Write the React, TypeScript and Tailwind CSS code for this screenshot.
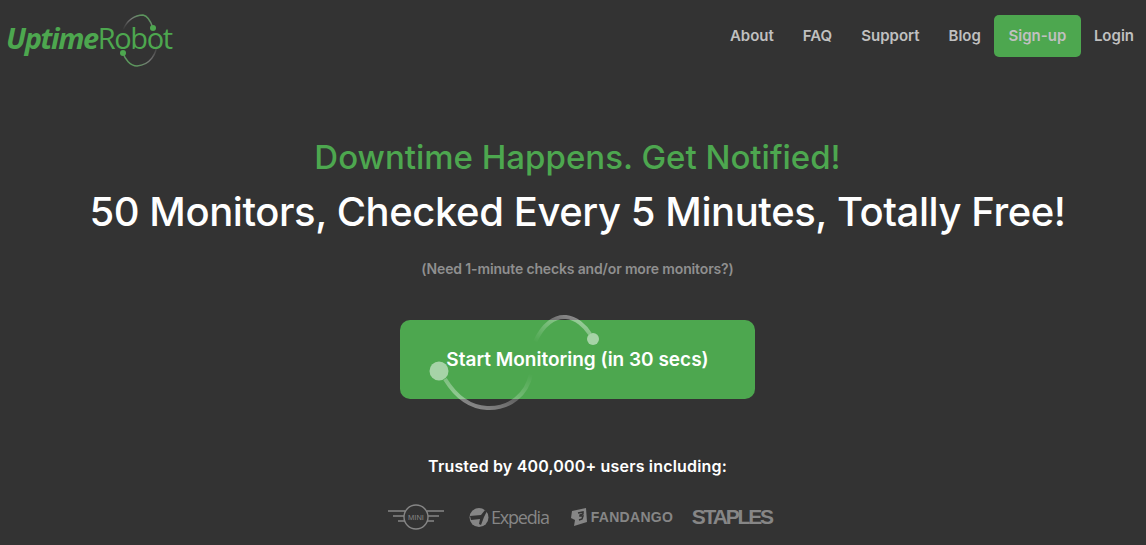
import React from 'react';

const links = ['About', 'FAQ', 'Support', 'Blog'];

const Logo = () => (
  <div className="relative w-[176px] h-[64px] font-['Open_Sans',sans-serif] text-[#4da74f]">
    <svg className="absolute left-[116px] top-[12px]" width="46" height="58" viewBox="0 0 46 58" fill="none">
      <defs>
        <linearGradient id="lt" x1="0" y1="1" x2="1" y2="0">
          <stop offset="0" stopColor="#666" stopOpacity="0" />
          <stop offset="0.5" stopColor="#777" />
          <stop offset="1" stopColor="#4da74f" />
        </linearGradient>
        <linearGradient id="lb" x1="1" y1="0" x2="0" y2="1">
          <stop offset="0" stopColor="#666" stopOpacity="0" />
          <stop offset="0.5" stopColor="#777" />
          <stop offset="1" stopColor="#4da74f" />
        </linearGradient>
      </defs>
      <path d="M7 18C11 8 19 3 27 3C32 4 35 10 37 16" stroke="url(#lt)" strokeWidth="1.5" />
      <path d="M41 30C41 42 34 53 21 54C14 54 9 47 7 41" stroke="url(#lb)" strokeWidth="1.5" />
      <circle cx="37" cy="16" r="3" fill="#4da74f" />
      <circle cx="7" cy="41" r="3" fill="#4da74f" />
    </svg>
    <span className="absolute left-[6px] top-[14px] text-[29px] leading-[48px] tracking-[-1.4px] whitespace-nowrap">
      <span className="font-bold italic">Uptime</span>
      <span className="font-normal">Robot</span>
    </span>
  </div>
);

const Header = () => (
  <header className="flex items-start justify-between pr-[12px] pt-[15px] h-[76px]">
    <div className="-mt-[15px]">
      <Logo />
    </div>
    <nav className="flex items-center text-[15px] font-semibold text-[#c0c0c0]">
      <div className="flex items-center gap-[29px] mr-[13px]">
        {links.map((l) => (
          <a key={l} className="h-[42px] leading-[42px]">{l}</a>
        ))}
      </div>
      <a className="w-[87px] h-[42px] leading-[42px] text-center bg-[#4da74f] rounded-[5px]">Sign-up</a>
      <a className="ml-[13px] h-[42px] leading-[42px]">Login</a>
    </nav>
  </header>
);

const CtaButton = () => (
  <div className="relative w-[355px] h-[79px] mt-[41px]">
    <button className="w-full h-full bg-[#4da74f] rounded-[10px] text-white text-[19px] font-semibold pt-[2px]">
      Start Monitoring (in 30 secs)
    </button>
    <svg className="absolute left-[25px] -top-[8px] pointer-events-none" width="180" height="102" viewBox="0 0 180 102" fill="none">
      <defs>
        <linearGradient id="ct" x1="0" y1="1" x2="1" y2="0">
          <stop offset="0" stopColor="#fff" stopOpacity="0" />
          <stop offset="0.5" stopColor="#fff" stopOpacity="0.25" />
          <stop offset="1" stopColor="#fff" stopOpacity="0.5" />
        </linearGradient>
        <linearGradient id="cb" x1="1" y1="0" x2="0" y2="1">
          <stop offset="0" stopColor="#fff" stopOpacity="0" />
          <stop offset="0.5" stopColor="#fff" stopOpacity="0.25" />
          <stop offset="1" stopColor="#fff" stopOpacity="0.5" />
        </linearGradient>
      </defs>
      <path d="M110 30C118 12 130 4 141 5C151 6 160 14 165 22" stroke="url(#ct)" strokeWidth="4" />
      <path d="M20 67C28 80 42 95 62 96C85 97 102 82 106 62" stroke="url(#cb)" strokeWidth="4" />
      <circle cx="168" cy="27" r="6" fill="#fff" fillOpacity="0.5" />
      <circle cx="14" cy="59" r="9.5" fill="#fff" fillOpacity="0.5" />
    </svg>
  </div>
);

const Brands = () => (
  <div className="flex items-center mt-[19px] ml-[5px] text-[#868686] h-[40px]">
    <svg width="56" height="26" viewBox="0 0 56 26" fill="none" stroke="#868686">
      <circle cx="28" cy="13" r="12" strokeWidth="1.4" />
      <path d="M0 7H17M5 12H16M10 17H17M39 7H56M40 12H51M39 17H46" strokeWidth="1.5" />
      <text x="28" y="15.5" fontSize="7.5" fill="#868686" stroke="none" textAnchor="middle" fontFamily="Liberation Sans">MINI</text>
    </svg>
    <svg className="ml-[25px]" width="20" height="21" viewBox="0 0 20 21">
      <circle cx="10" cy="10.5" r="9.5" fill="#868686" />
      <path d="M1 9L12 8L16 3L18 4L15 10L12 18L10 17L11 12L2 13Z" fill="#333" />
    </svg>
    <span className="ml-[2px] text-[18px] font-['Open_Sans',sans-serif] tracking-[-1.2px]">Expedia</span>
    <svg className="ml-[22px]" width="16" height="18" viewBox="0 0 16 18">
      <path d="M1 3L15 0L16 14L3 18L4 12L0 10Z" fill="#868686" />
      <path d="M7 5L12 4L12 6L9 7L9 8L12 8L11 11L8 12" fill="none" stroke="#333" strokeWidth="1.5" />
    </svg>
    <span className="ml-[4px] text-[14px] font-black font-['Liberation_Sans',sans-serif] tracking-[0.3px] w-[81px] whitespace-nowrap">FANDANGO</span>
    <span className="ml-[20px] text-[21px] font-bold font-['Liberation_Sans',sans-serif] tracking-[-2.15px]">STAPLES</span>
  </div>
);

export default function App() {
  return (
    <div className="w-[1146px] h-[545px] overflow-hidden bg-[#333333] font-['Inter','Lato',sans-serif]">
      <Header />
      <main className="flex flex-col items-center pl-[9px]">
        <h2 className="text-[33px] leading-[44px] mt-[59px] font-medium text-[#4da74f]">Downtime Happens. Get Notified!</h2>
        <h1 className="text-[40px] leading-[56px] mt-[5px] font-medium tracking-[-0.42px] text-white whitespace-nowrap">50 Monitors, Checked Every 5 Minutes, Totally Free!</h1>
        <p className="text-[14px] leading-[20px] mt-[19px] font-semibold tracking-[-0.15px] text-[#8f8f8f]">(Need 1-minute checks and/or more monitors?)</p>
        <CtaButton />
        <p className="text-[16px] leading-[24px] mt-[55px] font-semibold tracking-[0.17px] text-white">Trusted by 400,000+ users including:</p>
        <Brands />
      </main>
    </div>
  );
}
